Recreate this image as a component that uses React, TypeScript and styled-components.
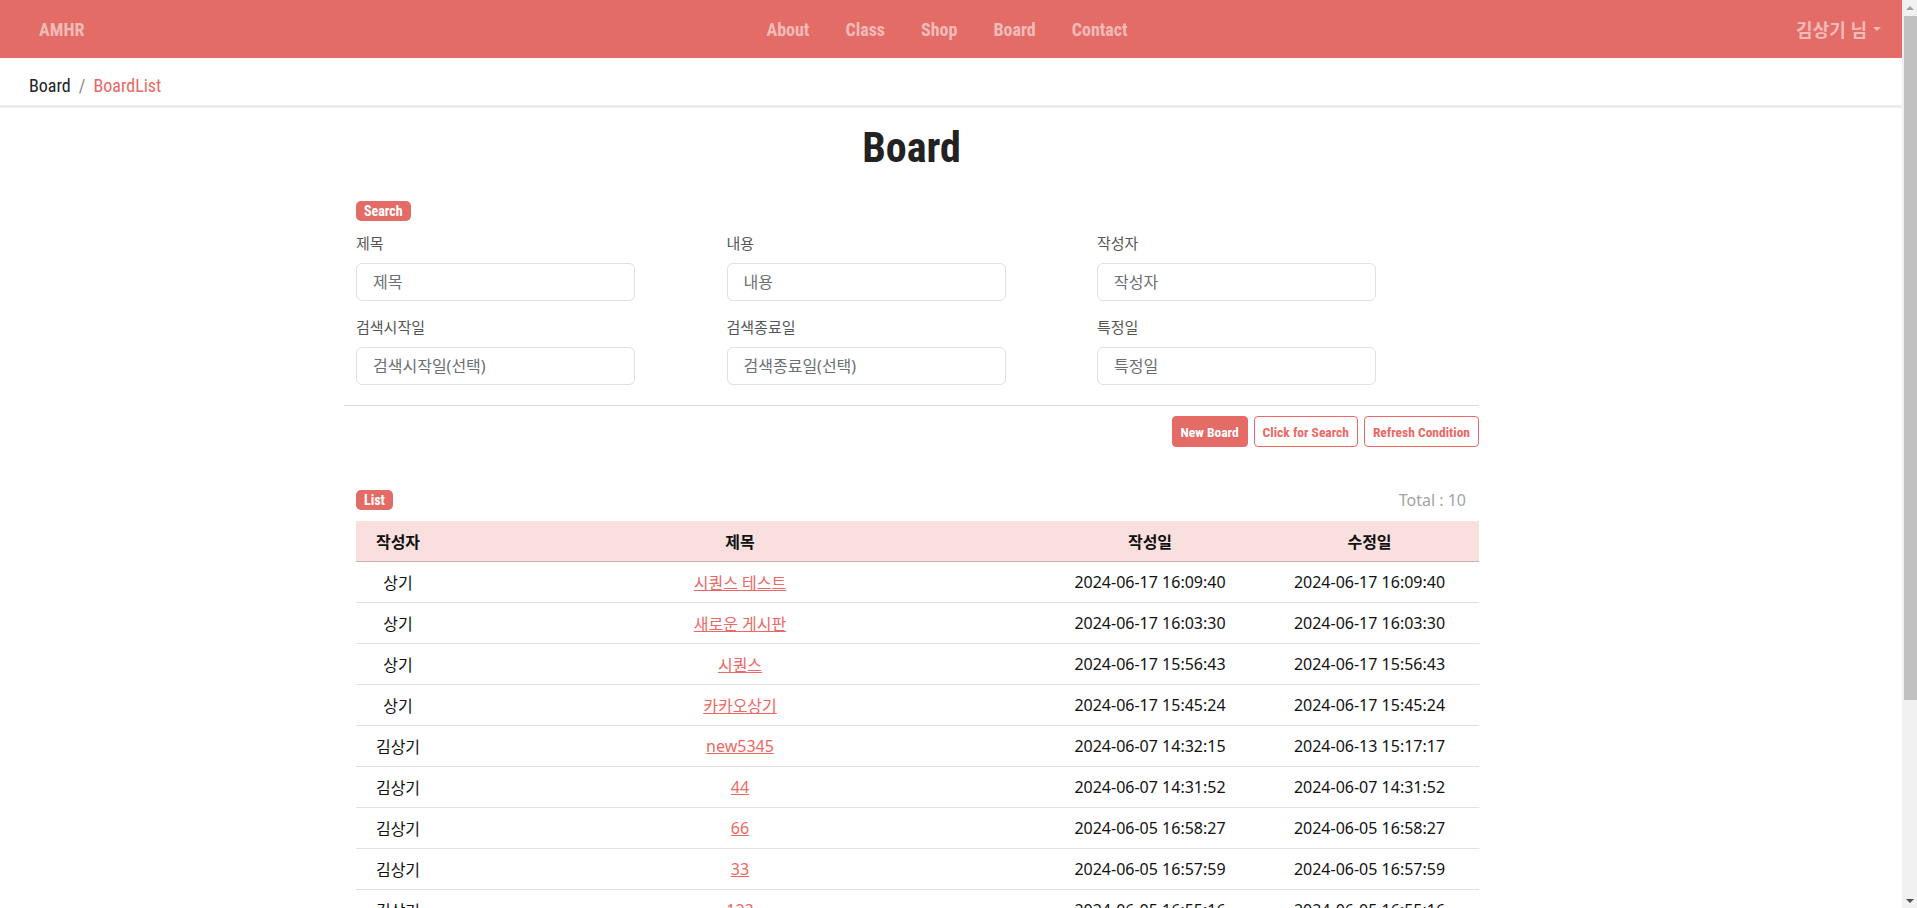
import React from "react";
import styled, { createGlobalStyle } from "styled-components";

const PRIMARY = "#e36c67";
const LINK = "#eb6864";
const NARROW = `"Roboto Condensed", "Open Sans Condensed", sans-serif`;
const KO = `"Noto Sans", "Noto Sans CJK KR", sans-serif`;

const Global = createGlobalStyle`
  html, body { margin: 0; height: 100%; overflow: hidden; }
  body { background: #fff; font-family: ${KO}; color: #222; }
  *, *::before, *::after { box-sizing: border-box; }
`;

const Shell = styled.div`
  display: flex;
  height: 100vh;
`;

const Page = styled.div`
  flex: 1;
  min-width: 0;
  height: 100vh;
  overflow: hidden;
`;

/* window scrollbar drawn at the right edge */
const ScrollTrack = styled.div`
  flex: none;
  width: 15px;
  height: 100vh;
  background: #f1f1f1;
  display: flex;
  flex-direction: column;
`;

const ArrowBtn = styled.div`
  height: 15px;
  display: flex;
  align-items: center;
  justify-content: center;
  padding-left: 1px;
`;

const Tri = styled.span<{ $dir: "up" | "down" }>`
  width: 0;
  height: 0;
  border-left: 4px solid transparent;
  border-right: 4px solid transparent;
  ${(p) =>
    p.$dir === "up"
      ? "border-bottom: 4px solid #a3a3a3;"
      : "border-top: 4px solid #505050;"}
`;

const Thumb = styled.div`
  margin: 1px 0 0 2px;
  height: 684px;
  background: #c1c1c1;
`;

const TrackRest = styled.div`
  flex: 1;
`;

const Navbar = styled.header`
  height: 58px;
  background: ${PRIMARY};
  display: grid;
  grid-template-columns: 1fr auto 1fr;
  align-items: center;
  padding: 0 21px 0 39px;
`;

const Brand = styled.a`
  justify-self: start;
  font: 700 18px ${NARROW};
  color: rgba(255, 255, 255, 0.55);
  text-decoration: none;
`;

const NavList = styled.nav`
  display: flex;
  gap: 36px;
  margin-right: 26px;
`;

const NavLink = styled.a`
  font: 700 18px ${NARROW};
  color: rgba(255, 255, 255, 0.55);
  text-decoration: none;
`;

const User = styled.div`
  justify-self: end;
  display: flex;
  align-items: center;
  gap: 6px;
  font: 700 18px ${KO};
  color: rgba(255, 255, 255, 0.55);
`;

const Caret = styled.span`
  width: 0;
  height: 0;
  border-top: 4px solid rgba(255, 255, 255, 0.55);
  border-left: 4px solid transparent;
  border-right: 4px solid transparent;
`;

const Crumbs = styled.nav`
  height: 50px;
  border-bottom: 3px solid #ececec;
  padding: 7px 29px 0;
  display: flex;
  align-items: center;
  font: 400 18px ${NARROW};
`;

const Crumb = styled.span<{ $active?: boolean }>`
  color: ${(p) => (p.$active ? LINK : "#222")};
`;

const Divider = styled.span`
  color: #8a8a8a;
  padding: 0 8px;
`;

const Main = styled.main`
  width: 1135px;
  margin-left: 344px;
`;

const Title = styled.h1`
  margin: 15px 0 0;
  text-align: center;
  font: 700 42px/50px ${NARROW};
  color: #222;
`;

const Section = styled.section`
  padding-left: 12px;
`;

const Badge = styled.span`
  display: inline-block;
  height: 20px;
  padding: 0 8px;
  border-radius: 5px;
  background: ${PRIMARY};
  color: #fff;
  font: 700 14px/20px ${NARROW};
`;

const SearchHead = styled.div`
  margin-top: 26px;
  height: 20px;
`;

const FormGrid = styled.div`
  display: grid;
  grid-template-columns: repeat(3, 370.5px);
  row-gap: 15px;
  margin-top: 13px;
`;

const Field = styled.label`
  display: flex;
  flex-direction: column;
  align-items: flex-start;
`;

const FieldLabel = styled.span`
  font: 400 15px/22px ${KO};
  color: #555;
  margin-bottom: 9px;
`;

const Input = styled.input`
  width: 279px;
  height: 38px;
  border: 1px solid #dfe1e4;
  border-radius: 6px;
  padding: 0 16px;
  font: 400 16px ${KO};
  color: #555;
  background: #fff;
  outline: none;
  &::placeholder {
    color: #6b6f73;
  }
`;

const Rule = styled.hr`
  margin: 20px 0 0;
  border: 0;
  border-top: 1px solid #dcdcdc;
`;

const Actions = styled.div`
  display: flex;
  justify-content: flex-end;
  gap: 6px;
  margin-top: 10px;
`;

const Button = styled.button<{ $solid?: boolean }>`
  height: 31px;
  padding: 0 8px;
  border-radius: 4px;
  border: 1px solid ${LINK};
  background: ${(p) => (p.$solid ? PRIMARY : "#fff")};
  color: ${(p) => (p.$solid ? "#fff" : LINK)};
  font: 700 13.5px ${NARROW};
  cursor: pointer;
`;

const ListHead = styled.div`
  margin-top: 43px;
  height: 20px;
  display: flex;
  justify-content: space-between;
  align-items: center;
  padding: 0 13px 0 12px;
`;

const Total = styled.span`
  font: 400 16px/20px ${KO};
  color: #a3a3a3;
`;

const Table = styled.table`
  margin: 11px 0 0 12px;
  width: 1123px;
  border-collapse: collapse;
  table-layout: fixed;
`;

const Th = styled.th<{ $w: number }>`
  width: ${(p) => p.$w}px;
  height: 40px;
  padding: 0;
  background: #f9e0df;
  border-bottom: 1px solid #c6b3b2;
  font: 700 16px ${KO};
  color: #111;
  text-align: center;
`;

const Td = styled.td`
  height: 41px;
  padding: 0;
  border-bottom: 1px solid #dee2e6;
  font: 400 16px ${KO};
  color: #111;
  text-align: center;
`;

const TitleLink = styled.a`
  color: ${LINK};
  text-decoration: underline;
`;

type Row = { writer: string; title: string; created: string; updated: string };

const rows: Row[] = [
  { writer: "상기", title: "시퀀스 테스트", created: "2024-06-17 16:09:40", updated: "2024-06-17 16:09:40" },
  { writer: "상기", title: "새로운 게시판", created: "2024-06-17 16:03:30", updated: "2024-06-17 16:03:30" },
  { writer: "상기", title: "시퀀스", created: "2024-06-17 15:56:43", updated: "2024-06-17 15:56:43" },
  { writer: "상기", title: "카카오상기", created: "2024-06-17 15:45:24", updated: "2024-06-17 15:45:24" },
  { writer: "김상기", title: "new5345", created: "2024-06-07 14:32:15", updated: "2024-06-13 15:17:17" },
  { writer: "김상기", title: "44", created: "2024-06-07 14:31:52", updated: "2024-06-07 14:31:52" },
  { writer: "김상기", title: "66", created: "2024-06-05 16:58:27", updated: "2024-06-05 16:58:27" },
  { writer: "김상기", title: "33", created: "2024-06-05 16:57:59", updated: "2024-06-05 16:57:59" },
  { writer: "김상기", title: "123", created: "2024-06-05 16:55:16", updated: "2024-06-05 16:55:16" },
  { writer: "김상기", title: "22", created: "2024-06-05 16:54:02", updated: "2024-06-05 16:54:02" },
];

const fields = [
  { label: "제목", ph: "제목" },
  { label: "내용", ph: "내용" },
  { label: "작성자", ph: "작성자" },
  { label: "검색시작일", ph: "검색시작일(선택)" },
  { label: "검색종료일", ph: "검색종료일(선택)" },
  { label: "특정일", ph: "특정일" },
];

export default function App() {
  return (
    <Shell>
      <Global />
      <Page>
        <Navbar>
          <Brand href="#">AMHR</Brand>
          <NavList>
            {["About", "Class", "Shop", "Board", "Contact"].map((n) => (
              <NavLink key={n} href="#">
                {n}
              </NavLink>
            ))}
          </NavList>
          <User>
            김상기 님 <Caret />
          </User>
        </Navbar>
        <Crumbs>
          <Crumb>Board</Crumb>
          <Divider>/</Divider>
          <Crumb $active>BoardList</Crumb>
        </Crumbs>
        <Main>
          <Title>Board</Title>
          <Section>
            <SearchHead>
              <Badge>Search</Badge>
            </SearchHead>
            <FormGrid>
              {fields.map((f) => (
                <Field key={f.label}>
                  <FieldLabel>{f.label}</FieldLabel>
                  <Input placeholder={f.ph} />
                </Field>
              ))}
            </FormGrid>
          </Section>
          <Rule />
          <Actions>
            <Button $solid>New Board</Button>
            <Button>Click for Search</Button>
            <Button>Refresh Condition</Button>
          </Actions>
          <ListHead>
            <Badge>List</Badge>
            <Total>Total : 10</Total>
          </ListHead>
          <Table>
            <thead>
              <tr>
                <Th $w={84}>작성자</Th>
                <Th $w={600}>제목</Th>
                <Th $w={220}>작성일</Th>
                <Th $w={219}>수정일</Th>
              </tr>
            </thead>
            <tbody>
              {rows.map((r, i) => (
                <tr key={i}>
                  <Td>{r.writer}</Td>
                  <Td>
                    <TitleLink href="#">{r.title}</TitleLink>
                  </Td>
                  <Td>{r.created}</Td>
                  <Td>{r.updated}</Td>
                </tr>
              ))}
            </tbody>
          </Table>
        </Main>
      </Page>
      <ScrollTrack>
        <ArrowBtn>
          <Tri $dir="up" />
        </ArrowBtn>
        <Thumb />
        <TrackRest />
        <ArrowBtn>
          <Tri $dir="down" />
        </ArrowBtn>
      </ScrollTrack>
    </Shell>
  );
}
